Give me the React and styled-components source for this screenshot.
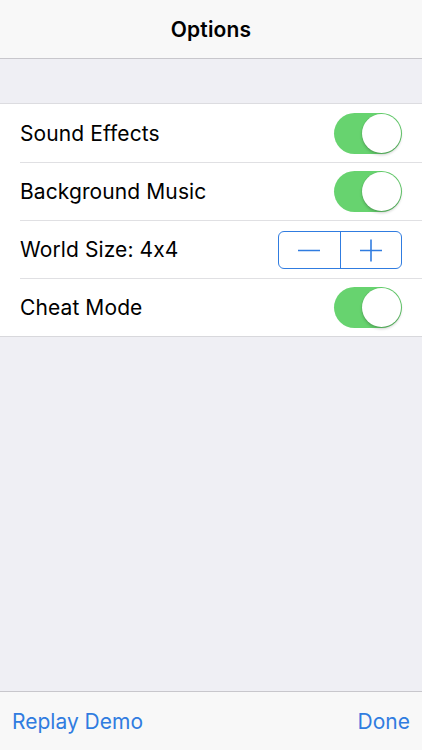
import styled, { createGlobalStyle } from "styled-components"

const GlobalStyle = createGlobalStyle`
    html, body {
        margin: 0;
        padding: 0;
        background-color: #efeff4;
    }
    * {
        box-sizing: border-box;
    }
`

const Screen = styled.div`
    width: 422px;
    height: 750px;
    display: flex;
    flex-direction: column;
    background-color: #efeff4;
    font-family: 'Inter', 'Roboto', sans-serif;
    color: #000000;
    overflow: hidden;
`

const NavBar = styled.header`
    height: 59px;
    flex-shrink: 0;
    display: flex;
    align-items: center;
    justify-content: center;
    background-color: #f8f8f8;
    border-bottom: 1px solid #c8c7cc;
    h1 {
        margin: 0;
        font-size: 21px;
        font-weight: 600;
        letter-spacing: 0.2px;
    }
`

const Content = styled.main`
    flex: 1;
    padding-top: 44px;
`

const Table = styled.div`
    background-color: #ffffff;
    border-top: 1px solid #dcdce0;
    border-bottom: 1px solid #d8d8dc;
`

const Row = styled.div`
    height: 58px;
    margin-left: 20px;
    padding-right: 20px;
    display: flex;
    align-items: center;
    justify-content: space-between;
    border-top: ${(p) => (p.first ? "none" : "1px solid #e0e0e3")};
    span {
        font-size: 21px;
        font-weight: 400;
        letter-spacing: 0.1px;
    }
`

const Switch = styled.div`
    width: 68px;
    height: 41px;
    border-radius: 21px;
    background-color: ${(p) => (p.on ? "#67d36f" : "#e5e5ea")};
    position: relative;
    div {
        position: absolute;
        top: 1px;
        left: ${(p) => (p.on ? "28px" : "1px")};
        width: 39px;
        height: 39px;
        border-radius: 50%;
        background-color: #ffffff;
        box-shadow: 0 2px 3px rgba(0, 0, 0, 0.2), 0 0 0 0.5px rgba(0, 0, 0, 0.08);
    }
`

const Stepper = styled.div`
    width: 124px;
    height: 38px;
    display: flex;
    border: 1.3px solid #307ce0;
    border-radius: 6px;
    overflow: hidden;
`

const StepButton = styled.button`
    flex: 1;
    border: none;
    border-left: ${(p) => (p.divided ? "1.3px solid #307ce0" : "none")};
    background: transparent;
    display: flex;
    align-items: center;
    justify-content: center;
    padding: 0;
    cursor: pointer;
`

const Toolbar = styled.footer`
    height: 59px;
    flex-shrink: 0;
    display: flex;
    align-items: center;
    justify-content: space-between;
    padding: 0 12px;
    background-color: #f8f8f8;
    border-top: 1px solid #c8c7cc;
    button {
        border: none;
        background: transparent;
        padding: 0;
        font-family: inherit;
        font-size: 21px;
        color: #307ce0;
        cursor: pointer;
        margin-top: 1px;
    }
`

const Toggle = ({ on }) => (
    <Switch on={on}>
        <div />
    </Switch>
)

export default function App() {
    return (
        <Screen>
            <GlobalStyle />
            <NavBar>
                <h1>Options</h1>
            </NavBar>
            <Content>
                <Table>
                    <Row first>
                        <span>Sound Effects</span>
                        <Toggle on />
                    </Row>
                    <Row>
                        <span>Background Music</span>
                        <Toggle on />
                    </Row>
                    <Row>
                        <span>World Size: 4x4</span>
                        <Stepper>
                            <StepButton>
                                <svg width="24" height="24" viewBox="0 0 24 24">
                                    <path d="M1 12.5h22" stroke="#307ce0" strokeWidth="1.6" />
                                </svg>
                            </StepButton>
                            <StepButton divided>
                                <svg width="24" height="24" viewBox="0 0 24 24">
                                    <path d="M1 12.5h22M12 1.5v22" stroke="#307ce0" strokeWidth="1.6" />
                                </svg>
                            </StepButton>
                        </Stepper>
                    </Row>
                    <Row>
                        <span>Cheat Mode</span>
                        <Toggle on />
                    </Row>
                </Table>
            </Content>
            <Toolbar>
                <button>Replay Demo</button>
                <button>Done</button>
            </Toolbar>
        </Screen>
    )
}
